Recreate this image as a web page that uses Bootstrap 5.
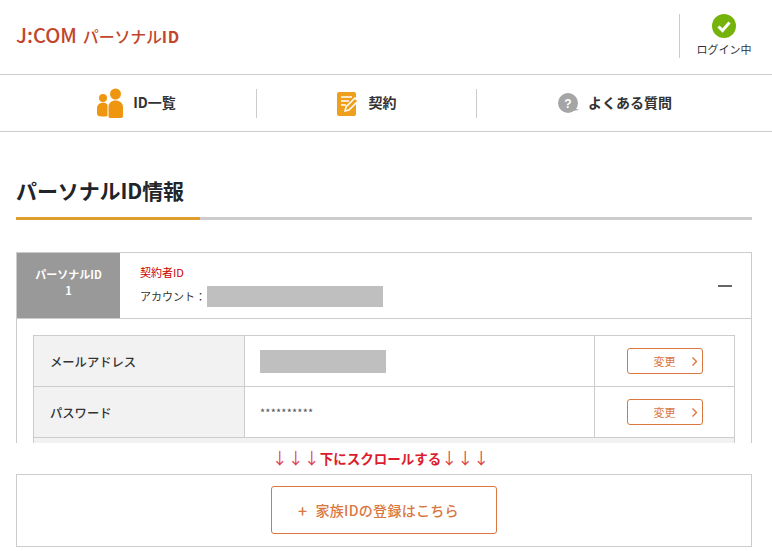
<!DOCTYPE html>
<html lang="ja">
<head>
  <meta charset="UTF-8">
  <title>J:COM パーソナルID</title>
  <link href="https://cdn.jsdelivr.net/npm/bootstrap@5.3.3/dist/css/bootstrap.min.css" rel="stylesheet">
  <style>
    html, body { height: 551px; overflow: hidden; }
    body { font-family: "Noto Sans CJK JP", "Liberation Sans", sans-serif; color: #333; background: #fff; }
    .page-scroll { height: 443px; overflow: hidden; }
    .top-head { height: 75px; border-bottom: 1px solid #ccc; padding: 14px 20px 0 16px; }
    .brand { color: #c2452c; font-size: 16px; font-weight: 500; line-height: 1; margin-top: 11px; letter-spacing: -.2px; }
    .brand b { font-size: 20px; font-weight: 500; margin-right: 6px; letter-spacing: 0; }
    .brand i { font-style: normal; font-size: 16px; font-weight: 700; letter-spacing: .6px; }
    .login-box { height: 44px; border-left: 1px solid #ccc; padding-left: 16px; width: 73px; font-size: 11px; line-height: 1; color: #333; }
    .login-box span { margin-top: 6px; white-space: nowrap; }
    .main-nav { height: 57px; border-bottom: 1px solid #ccc; }
    .nav-cell { font-size: 14px; font-weight: 700; gap: 8px; height: 29px; }
    .nav-cell span { padding-bottom: 1px; }
    .nav-a { width: 256px; padding-left: 17px; }
    .nav-b { width: 221px; border-left: 1px solid #ccc; border-right: 1px solid #ccc; }
    .nav-c { width: 295px; gap: 9px; padding-right: 19px; }
    .page-title { font-size: 21px; font-weight: 700; color: #212529; line-height: 28px; margin: 44px 16px 0; height: 41px; letter-spacing: -.1px; }
    .title-rule { height: 3px; margin: 0 20px 0 16px; background: #ccc; }
    .title-rule div { width: 184px; height: 3px; background: #dd9d2f; }
    .id-card { margin: 32px 20px 0 16px; border: 1px solid #ccc; border-bottom: 0; }
    .id-head { height: 66px; border-bottom: 1px solid #ccc; }
    .id-tab { width: 103px; background: #999; color: #fff; font-size: 11px; font-weight: 700; line-height: 16px; text-align: center; padding-bottom: 8px; }
    .id-info { padding: 2px 0 0 20px; font-size: 11px; line-height: 1; }
    .owner { color: #c00; margin-bottom: 8px; }
    .masked { background: #bfbfbf; display: block; }
    .mask-a { width: 176px; height: 21px; margin-left: 1px; }
    .mask-b { width: 126px; height: 23px; }
    .minus { width: 14px; height: 2px; background: #666; margin-right: 19px; }
    .id-body { padding: 16px 16px 0; }
    .info-table { border-collapse: collapse; width: 702px; table-layout: fixed; font-size: 12.3px; margin: 0; }
    .info-table th, .info-table td { border: 1px solid #ccc; height: 51px; padding: 0; vertical-align: middle; }
    .info-table th { width: 211px; background: #f2f2f2; font-weight: 500; padding: 2px 0 0 16px; color: #333; }
    .info-table td.val { width: 350px; padding-left: 15px; }
    .stars { font-size: 11px; color: #555; letter-spacing: .2px; }
    .change-btn { width: 76px; height: 26px; margin-left: 32px; border: 1px solid #d9773f; border-radius: 3px; color: #d9773f; font-size: 11px; padding: 0 5px 0 0; background: #fff; }
    .change-btn span { flex: 1; text-align: center; padding-left: 9px; }
    .scroll-note { height: 31px; color: #dc1c2e; font-size: 13.5px; font-weight: 700; text-align: center; line-height: 29px; margin-right: 11px; }
    .scroll-note em { font-style: normal; font-weight: 400; font-size: 16px; color: #e0404a; }
    .add-box { height: 73px; margin: 0 20px 0 16px; border: 1px solid #ccc; }
    .add-btn { width: 226px; height: 48px; margin-bottom: 1px; padding-right: 11px; border: 1px solid #d9773f; border-radius: 3px; color: #d9773f; font-size: 14px; font-weight: 500; letter-spacing: .3px; background: #fff; gap: 8px; }
    .add-btn .plus-sign { font-size: 16px; line-height: 1; }
  </style>
</head>
<body>
  <div class="page-scroll">
    <header class="top-head d-flex justify-content-between align-items-start">
      <div class="brand"><b>J:COM</b>パーソナル<i>ID</i></div>
      <div class="login-box d-flex flex-column align-items-center">
        <svg width="24" height="24" viewBox="0 0 24 24"><circle cx="12" cy="12" r="12" fill="#76b30a"/><path d="M6.5 12.500l4 4 7-8" fill="none" stroke="#fff" stroke-width="3"/></svg>
        <span>ログイン中</span>
      </div>
    </header>

    <nav class="main-nav d-flex align-items-center">
      <div class="nav-cell nav-a d-flex align-items-center justify-content-center">
        <svg width="28" height="30" viewBox="0 0 28 30"><circle cx="6" cy="10" r="4" fill="#ee9610"/><path d="M0 20a6 5.500 0 0 1 10.500 -3.500v11l-1 1h-5c-3 0 -4.500 -1 -4.500 -3z" fill="#ee9610"/><circle cx="18.500" cy="6" r="5.500" fill="#ee9610"/><path d="M11.500 19c0 -4 3 -6.500 7 -6.500s7.500 2.500 7.500 6.500v9.500l-1.500 1.500h-12l-1 -1.500z" fill="#ee9610"/></svg>
        <span>ID一覧</span>
      </div>
      <div class="nav-cell nav-b d-flex align-items-center justify-content-center">
        <svg width="24" height="25" viewBox="0 0 24 25"><path d="M2 1h15a2 2 0 0 1 2 2v20a2 2 0 0 1 -2 2h-15a2 2 0 0 1 -2 -2v-20a2 2 0 0 1 2 -2z" fill="#ee9f1c"/><path d="M4 6h11M4 10h8M4 14h5" stroke="#fff" stroke-width="1.500"/><path d="M8 20l1 -4 9 -9 3 3 -9 9z" fill="#ee9f1c" stroke="#fff" stroke-width="1.500"/><path d="M19 5l1.500 -1.500 3 3 -1.500 1.500z" fill="#fff"/></svg>
        <span>契約</span>
      </div>
      <div class="nav-cell nav-c d-flex align-items-center justify-content-center">
        <svg width="21" height="20" viewBox="0 0 21 20"><circle cx="10" cy="10" r="10" fill="#a5a5a5"/><path d="M16 15l5 2 -7 1z" fill="#a5a5a5"/><text x="10" y="14.500" font-size="12" font-weight="700" text-anchor="middle" fill="#fff" font-family="Liberation Sans, sans-serif">?</text></svg>
        <span>よくある質問</span>
      </div>
    </nav>

    <h1 class="page-title">パーソナルID情報</h1>
    <div class="title-rule"><div></div></div>

    <section class="id-card">
      <div class="id-head d-flex align-items-stretch">
        <div class="id-tab d-flex align-items-center justify-content-center">パーソナルID<br>1</div>
        <div class="id-info d-flex flex-column justify-content-center flex-grow-1">
          <div class="owner">契約者ID</div>
          <div class="d-flex align-items-center">アカウント：<span class="masked mask-a"></span></div>
        </div>
        <div class="d-flex align-items-center"><div class="minus"></div></div>
      </div>
      <div class="id-body">
        <table class="info-table">
          <tr>
            <th>メールアドレス</th>
            <td class="val"><span class="masked mask-b"></span></td>
            <td><a class="change-btn d-flex align-items-center text-decoration-none" href="#"><span>変更</span><svg width="5" height="9" viewBox="0 0 5 9"><path d="M.5 .5l4 4 -4 4" fill="none" stroke="#d9773f" stroke-width="1.400"/></svg></a></td>
          </tr>
          <tr>
            <th>パスワード</th>
            <td class="val stars">**********</td>
            <td><a class="change-btn d-flex align-items-center text-decoration-none" href="#"><span>変更</span><svg width="5" height="9" viewBox="0 0 5 9"><path d="M.5 .5l4 4 -4 4" fill="none" stroke="#d9773f" stroke-width="1.400"/></svg></a></td>
          </tr>
          <tr>
            <th colspan="3"></th>
          </tr>
        </table>
      </div>
    </section>
  </div>

  <div class="scroll-note"><em>↓↓↓</em>下にスクロールする<em>↓↓↓</em></div>
  <div class="add-box d-flex align-items-center justify-content-center">
    <a class="add-btn d-flex align-items-center justify-content-center text-decoration-none" href="#"><span class="plus-sign">+</span><span>家族IDの登録はこちら</span></a>
  </div>

  <script src="https://cdn.jsdelivr.net/npm/bootstrap@5.3.3/dist/js/bootstrap.bundle.min.js"></script>
</body>
</html>
